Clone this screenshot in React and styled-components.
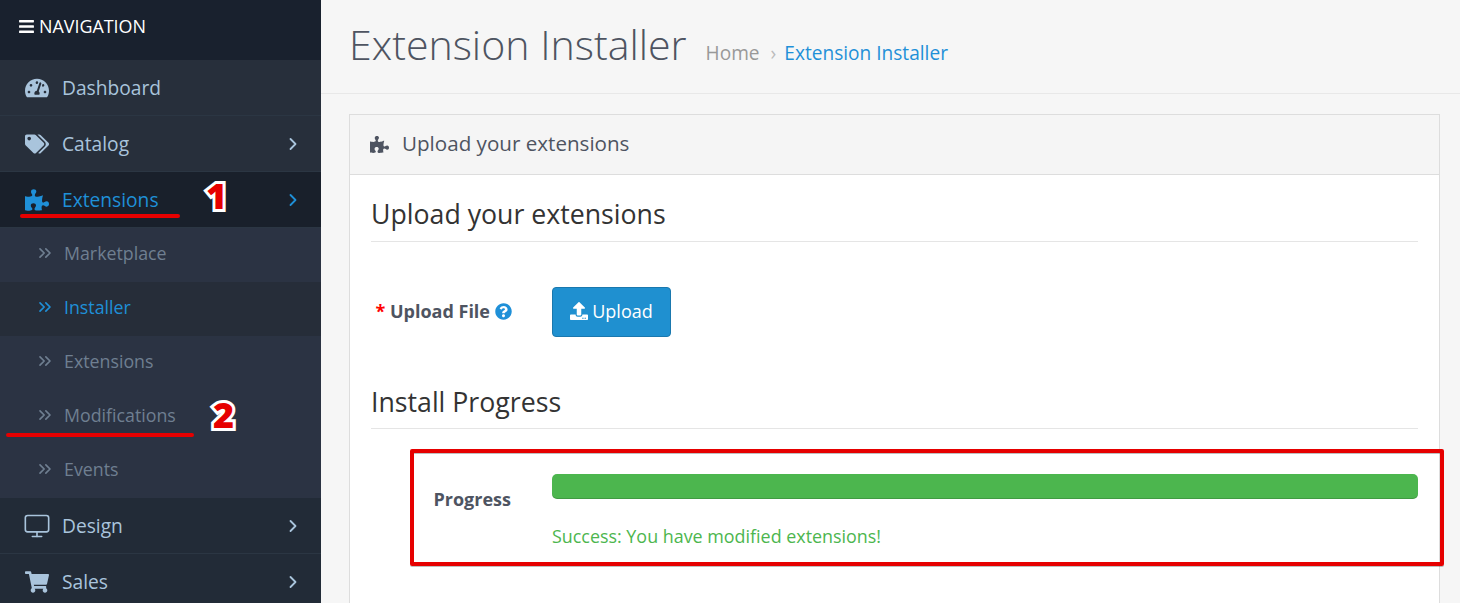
import styled, { createGlobalStyle } from "styled-components";
import {
  FaBars,
  FaTachometerAlt,
  FaTags,
  FaPuzzlePiece,
  FaShoppingCart,
  FaUpload,
  FaQuestionCircle,
} from "react-icons/fa";
import { ChevronRight, ChevronsRight, Monitor } from "lucide-react";

const GlobalStyle = createGlobalStyle`
  html, body {
    margin: 0;
    height: 100%;
    overflow: hidden;
    font-family: "Open Sans", "Liberation Sans", sans-serif;
  }
  * {
    box-sizing: border-box;
  }
`;

const Page = styled.div`
  position: relative;
  display: flex;
  width: 1460px;
  height: 603px;
  overflow: hidden;
  background: #f6f6f6;
`;

const Sidebar = styled.nav`
  flex: 0 0 321px;
  display: flex;
  flex-direction: column;
  background: #222b37;
`;

const NavHeader = styled.div`
  height: 60px;
  flex: none;
  display: flex;
  align-items: center;
  gap: 4px;
  padding: 0 0 8px 18px;
  background: #19212e;
  color: #fff;
  font-size: 17.9px;
  svg {
    font-size: 17px;
  }
`;

const MenuRow = styled.div`
  height: 56px;
  flex: none;
  display: flex;
  align-items: center;
  padding: 0 18px 0 25px;
  font-size: 19.2px;
  color: ${(p) => (p.$active ? "#1f90d8" : "#a9c4dc")};
  background: ${(p) => (p.$active ? "#19202b" : p.$bg || "#222b37")};
  border-bottom: 1px solid #2b3643;
`;

const MenuIcon = styled.span`
  flex: 0 0 37px;
  display: flex;
  align-items: center;
  font-size: 24px;
`;

const MenuLabel = styled.span`
  flex: 1;
`;

const DesktopIcon = styled(Monitor)`
  margin-left: -2px;
`;

const SubMenu = styled.div`
  background: #2b3343;
  display: flex;
  flex-direction: column;
`;

const SubRow = styled.div`
  height: 54px;
  display: flex;
  align-items: center;
  padding: 0 0 5px 35px;
  font-size: 17.8px;
  color: ${(p) => (p.$active ? "#1f90d8" : "#6f7f91")};
  background: ${(p) => (p.$active ? "#262d39" : "transparent")};
  svg {
    flex: 0 0 20px;
    margin-right: 9px;
  }
`;

const Main = styled.main`
  flex: 1;
  min-width: 0;
  display: flex;
  flex-direction: column;
`;

const PageHeader = styled.header`
  height: 94px;
  flex: none;
  display: flex;
  align-items: baseline;
  padding: 16px 0 0 28px;
  border-bottom: 1px solid #e8e8e8;
`;

const PageTitle = styled.h1`
  margin: 0;
  font-size: 41.1px;
  font-weight: 300;
  line-height: 56px;
  color: #4e5461;
`;

const Breadcrumb = styled.div`
  margin-left: 19px;
  display: flex;
  gap: 11px;
  font-size: 19.1px;
  color: #999;
`;

const CrumbSeparator = styled.span`
  color: #bbb;
`;

const CrumbLink = styled.span`
  margin-left: -3px;
  color: #1f90d8;
`;

const Panel = styled.section`
  margin: 20px 20px 0 28px;
  flex: 1;
  background: #fff;
  border: 1px solid #ddd;
  border-bottom: none;
`;

const PanelHeading = styled.div`
  height: 60px;
  display: flex;
  align-items: center;
  gap: 13px;
  padding: 0 0 3px 20px;
  background: #f5f5f5;
  border-bottom: 1px solid #ddd;
  font-size: 20.6px;
  color: #4e5461;
  svg {
    font-size: 19px;
    margin-top: 2px;
  }
`;

const PanelBody = styled.div`
  padding: 0 21px;
`;

const Legend = styled.h2`
  margin: 0;
  height: ${(p) => p.$height}px;
  display: flex;
  align-items: flex-end;
  padding-bottom: ${(p) => p.$pad}px;
  font-size: 26.7px;
  font-weight: 400;
  color: #333;
  border-bottom: 1px solid #e5e5e5;
`;

const FormRow = styled.div`
  display: grid;
  grid-template-columns: 141px 1fr;
  column-gap: 40px;
  align-items: ${(p) => p.$align || "center"};
  padding-top: ${(p) => p.$top}px;
  padding-bottom: ${(p) => p.$bottom}px;
`;

const FieldLabel = styled.label`
  display: flex;
  justify-content: flex-end;
  align-items: center;
  gap: 5px;
  padding-bottom: 2px;
  font-size: 18px;
  font-weight: 700;
  color: #4e5461;
`;

const Required = styled.span`
  color: #f00;
`;

const HelpIcon = styled(FaQuestionCircle)`
  color: #1f90d8;
  font-size: 17px;
`;

const UploadButton = styled.button`
  width: 119px;
  height: 50px;
  display: flex;
  align-items: center;
  justify-content: center;
  gap: 4px;
  padding: 0 0 2px;
  font-family: inherit;
  font-size: 18px;
  color: #fff;
  background: #1f90d0;
  border: 1px solid #1a78ae;
  border-radius: 4px;
  svg {
    font-size: 18px;
  }
`;

const ProgressTrack = styled.div`
  height: 25px;
  background: #4cb64e;
  border-radius: 5px;
  box-shadow: inset 0 -1px 0 rgba(0, 0, 0, 0.15);
`;

const SuccessText = styled.div`
  margin-top: 25px;
  font-size: 17.9px;
  color: #4cb64e;
`;

const ProgressLabel = styled(FieldLabel)`
  height: 50px;
  padding: 0 1px 0 0;
`;

const RedBox = styled.div`
  position: absolute;
  left: 410px;
  top: 449px;
  width: 1034px;
  height: 117px;
  border: 4px solid #e60000;
  border-radius: 2px;
  box-shadow: 0 1px 0 rgba(0, 0, 0, 0.25), inset 0 1px 0 rgba(0, 0, 0, 0.25);
`;

const Underline = styled.div`
  position: absolute;
  left: ${(p) => p.$left}px;
  top: ${(p) => p.$top}px;
  width: ${(p) => p.$width}px;
  height: 4px;
  background: #e60000;
  border-radius: 2px;
`;

const Badge = styled.span`
  position: absolute;
  left: ${(p) => p.$left}px;
  top: ${(p) => p.$top}px;
  font-family: "Open Sans", sans-serif;
  font-size: 36px;
  font-weight: 800;
  line-height: 40px;
  color: #e60000;
  -webkit-text-stroke: 6px #fff;
  paint-order: stroke fill;
`;

const menuTop = [
  { label: "Dashboard", icon: <FaTachometerAlt />, bg: "#272f3b" },
  { label: "Catalog", icon: <FaTags />, chevron: true, bg: "#272f3b" },
  { label: "Extensions", icon: <FaPuzzlePiece />, chevron: true, active: true },
];

const subItems = [
  { label: "Marketplace" },
  { label: "Installer", active: true },
  { label: "Extensions" },
  { label: "Modifications" },
  { label: "Events" },
];

const menuBottom = [
  {
    label: "Design",
    icon: <DesktopIcon size={28} strokeWidth={1.4} />,
    chevron: true,
  },
  { label: "Sales", icon: <FaShoppingCart />, chevron: true },
];

function Row({ item }) {
  return (
    <MenuRow $active={item.active} $bg={item.bg}>
      <MenuIcon>{item.icon}</MenuIcon>
      <MenuLabel>{item.label}</MenuLabel>
      {item.chevron && <ChevronRight size={20} strokeWidth={2.2} />}
    </MenuRow>
  );
}

function App() {
  return (
    <Page>
      <GlobalStyle />
      <Sidebar>
        <NavHeader>
          <FaBars />
          NAVIGATION
        </NavHeader>
        {menuTop.map((item) => (
          <Row key={item.label} item={item} />
        ))}
        <SubMenu>
          {subItems.map((item) => (
            <SubRow key={item.label} $active={item.active}>
              <ChevronsRight size={20} strokeWidth={2} />
              {item.label}
            </SubRow>
          ))}
        </SubMenu>
        {menuBottom.map((item) => (
          <Row key={item.label} item={item} />
        ))}
      </Sidebar>
      <Main>
        <PageHeader>
          <PageTitle>Extension Installer</PageTitle>
          <Breadcrumb>
            <span>Home</span>
            <CrumbSeparator>›</CrumbSeparator>
            <CrumbLink>Extension Installer</CrumbLink>
          </Breadcrumb>
        </PageHeader>
        <Panel>
          <PanelHeading>
            <FaPuzzlePiece />
            Upload your extensions
          </PanelHeading>
          <PanelBody>
            <Legend $height={67} $pad={9}>Upload your extensions</Legend>
            <FormRow $top={45} $bottom={45}>
              <FieldLabel>
                <span>
                  <Required>*</Required> Upload File
                </span>
                <HelpIcon />
              </FieldLabel>
              <UploadButton>
                <FaUpload />
                Upload
              </UploadButton>
            </FormRow>
            <Legend $height={47} $pad={8}>Install Progress</Legend>
            <FormRow $top={45} $bottom={0} $align="start">
              <ProgressLabel>Progress</ProgressLabel>
              <div>
                <ProgressTrack />
                <SuccessText>Success: You have modified extensions!</SuccessText>
              </div>
            </FormRow>
          </PanelBody>
        </Panel>
      </Main>

      <Underline $left={20} $top={214} $width={160} />
      <Underline $left={6} $top={433} $width={188} />
      <Badge $left={206} $top={176}>1</Badge>
      <Badge $left={213} $top={395}>2</Badge>
      <RedBox />
    </Page>
  );
}

export default App;
